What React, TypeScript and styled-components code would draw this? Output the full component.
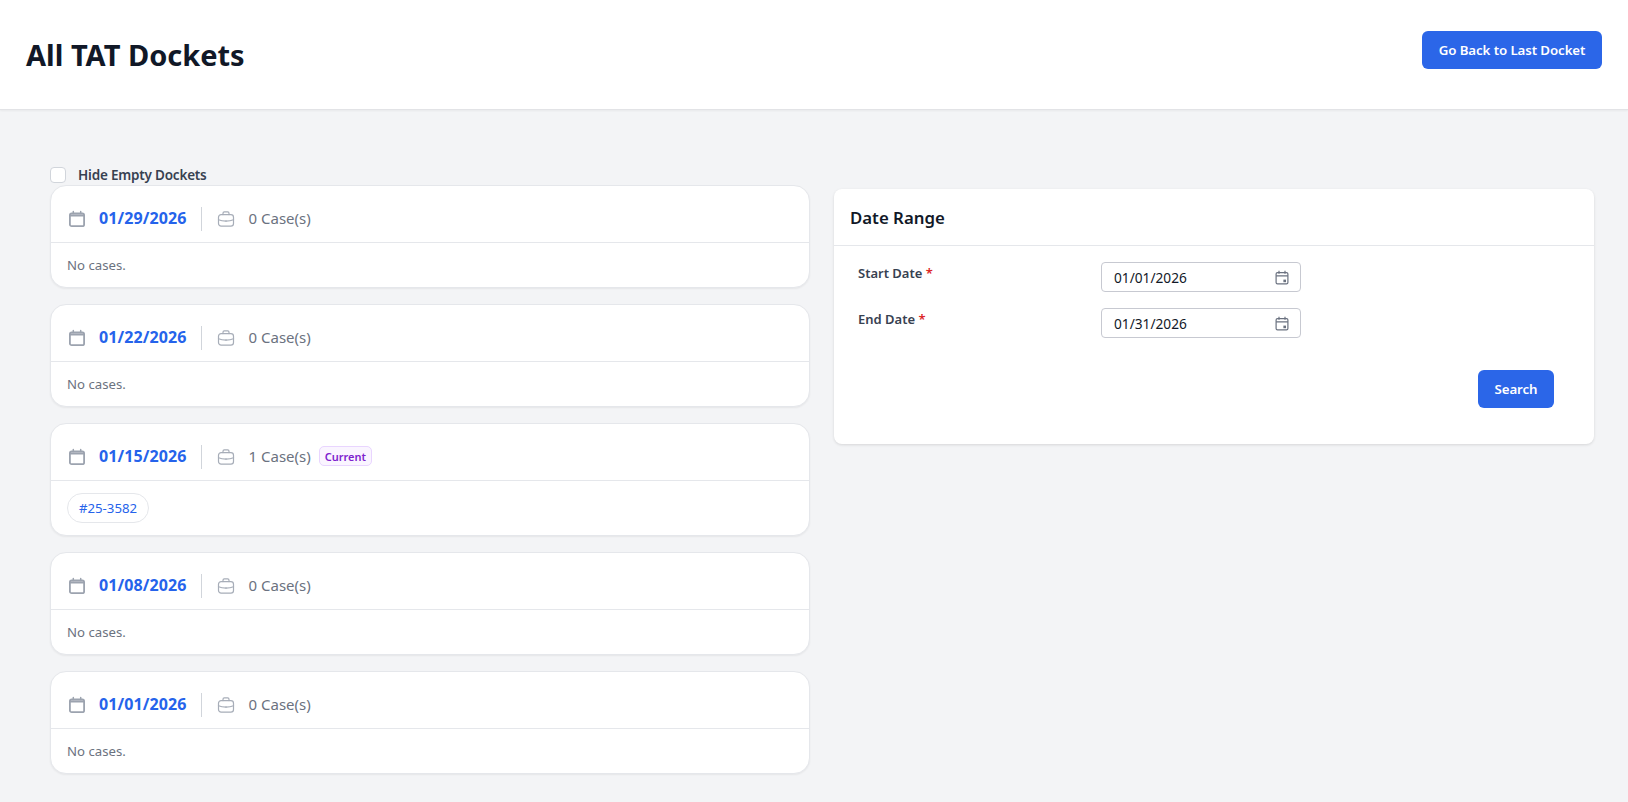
import React from "react";
import styled, { createGlobalStyle } from "styled-components";

const Global = createGlobalStyle`
  html, body { margin: 0; padding: 0; background: #f3f4f6; }
  body { font-family: "Noto Sans", "Open Sans", sans-serif; overflow: hidden; }
  * { box-sizing: border-box; }
`;

const Page = styled.div`
  min-height: 802px;
  background: #f3f4f6;
`;

const Header = styled.header`
  height: 110px;
  background: #fff;
  border-bottom: 1px solid #e2e3e6;
  box-shadow: 0 1px 2px rgba(0, 0, 0, 0.05);
  display: flex;
  align-items: flex-start;
  justify-content: space-between;
  padding: 31px 26px 0 26px;
`;

const Title = styled.h1`
  margin: 4px 0 0;
  font-size: 29px;
  line-height: 40px;
  font-weight: 700;
  color: #111827;
`;

const PrimaryButton = styled.button`
  border: 0;
  background: #2b66e8;
  color: #fff;
  font-family: inherit;
  font-size: 13.3px;
  font-weight: 600;
  height: 38px;
  padding: 0;
  width: ${(p: { $w: number }) => p.$w}px;
  border-radius: 6px;
  letter-spacing: -0.1px;
`;

const Content = styled.main`
  display: grid;
  grid-template-columns: 760px 760px;
  column-gap: 24px;
  align-items: start;
  padding: 55px 33px 0 50px;
`;

const LeftColumn = styled.div`
  display: flex;
  flex-direction: column;
`;

const CheckRow = styled.label`
  display: flex;
  align-items: center;
  height: 20px;
  gap: 12px;
  font-size: 13.5px;
  font-weight: 600;
  color: #374151;
  letter-spacing: -0.2px;
`;

const Check = styled.span`
  width: 16px;
  height: 16px;
  background: #fff;
  border: 1px solid #d1d5db;
  border-radius: 4px;
`;

const CardList = styled.div`
  display: flex;
  flex-direction: column;
  gap: 16px;
`;

const Card = styled.section`
  background: #fff;
  border: 1px solid #e5e7eb;
  border-radius: 16px;
  box-shadow: 0 1px 2px rgba(0, 0, 0, 0.06);
`;

const CardHead = styled.div`
  height: 57px;
  display: flex;
  align-items: center;
  padding: 9px 17px 0;
  border-bottom: 1px solid #e5e7eb;
`;

const DateLink = styled.span`
  font-size: 16px;
  font-weight: 700;
  color: #2563eb;
  margin: 0 0 2px 13px;
  letter-spacing: 0.1px;
`;

const Divider = styled.span`
  width: 1px;
  height: 24px;
  background: #d1d5db;
  margin: 0 15px 0 14px;
`;

const CaseCount = styled.span`
  font-size: 15px;
  color: #6b7280;
  margin: 0 0 2px 14px;
`;

const Tag = styled.span`
  margin: 0 0 1px 8px;
  height: 20px;
  padding: 0 5px;
  display: inline-flex;
  align-items: center;
  background: #faf5ff;
  border: 1px solid #e9d5ff;
  border-radius: 5px;
  color: #7e22ce;
  font-size: 11px;
  font-weight: 600;
`;

const CardBody = styled.div`
  height: 44px;
  display: flex;
  align-items: center;
  padding: 0 16px;
  font-size: 13.2px;
  color: #6b7280;
`;

const CaseBody = styled.div`
  height: 54px;
  display: flex;
  align-items: center;
  padding: 0 16px;
`;

const CasePill = styled.span`
  height: 30px;
  padding: 0 11px;
  display: inline-flex;
  align-items: center;
  border: 1px solid #e5e7eb;
  border-radius: 15px;
  font-size: 13.2px;
  color: #2563eb;
`;

const Panel = styled.section`
  margin-top: 24px;
  height: 255px;
  background: #fff;
  border-radius: 8px;
  box-shadow: 0 1px 3px rgba(0, 0, 0, 0.12);
`;

const PanelHead = styled.div`
  height: 57px;
  display: flex;
  align-items: center;
  padding: 0 16px;
  border-bottom: 1px solid #e5e7eb;
  font-size: 16.8px;
  font-weight: 600;
  color: #111827;
`;

const FormGrid = styled.div`
  display: grid;
  grid-template-columns: 243px 200px;
  row-gap: 16px;
  padding: 16px 0 0 24px;
`;

const FieldLabel = styled.label`
  font-size: 13px;
  font-weight: 600;
  color: #374151;
  line-height: 20px;
  padding-top: 1px;
`;

const Req = styled.span`
  color: #dc2626;
`;

const DateField = styled.div`
  width: 200px;
  height: 30px;
  display: flex;
  align-items: center;
  justify-content: space-between;
  border: 1px solid #c7c9d1;
  border-radius: 4px;
  padding: 0 11px 0 12px;
  background: #fff;
`;

const DateValue = styled.input`
  width: 120px;
  border: 0;
  outline: 0;
  padding: 0;
  background: transparent;
  font-family: inherit;
  font-size: 13.7px;
  color: #111827;
`;

const PanelFooter = styled.div`
  display: flex;
  justify-content: flex-end;
  padding: 32px 40px 0 0;
`;

const CalendarIcon = () => (
  <svg width="18" height="18" viewBox="0 0 18 18" fill="none" stroke="#9ca3af" strokeLinecap="round">
    <rect x="1.9" y="3.4" width="14.2" height="12.8" rx="1.8" strokeWidth="1.8" />
    <path d="M2 5.4h14" strokeWidth="2.2" strokeLinecap="butt" />
    <path d="M5.3 1.4v2M12.7 1.4v2" strokeWidth="1.5" />
  </svg>
);

const CaseIcon = () => (
  <svg width="18" height="18" viewBox="0 0 18 18" fill="none" stroke="#a7adb8" strokeWidth="1.2" strokeLinecap="round">
    <rect x="1.5" y="4.6" width="15" height="11.6" rx="2.6" />
    <path d="M6 4.6V3.2c0-.8.5-1.3 1.3-1.3h3.4c.8 0 1.3.5 1.3 1.3v1.4M1.5 9.8c2.2.9 4.8 1.3 7.5 1.3s5.3-.4 7.5-1.3M9 10.6v.9" />
  </svg>
);

const PickerIcon = () => (
  <svg width="14" height="15" viewBox="0 0 14 15" fill="none" stroke="#6b7280" strokeWidth="1.2">
    <rect x="1.1" y="2.6" width="11.8" height="11.3" rx="1.4" />
    <path d="M1.1 5.8h11.8M4 .8v3M10 .8v3" />
    <rect x="8.4" y="9.6" width="2.6" height="2.6" fill="#6b7280" stroke="none" />
  </svg>
);

type Docket = { date: string; count: number; current?: boolean; cases?: string[] };

const dockets: Docket[] = [
  { date: "01/29/2026", count: 0 },
  { date: "01/22/2026", count: 0 },
  { date: "01/15/2026", count: 1, current: true, cases: ["#25-3582"] },
  { date: "01/08/2026", count: 0 },
  { date: "01/01/2026", count: 0 },
];

export default function App() {
  return (
    <Page>
      <Global />
      <Header>
        <Title>All TAT Dockets</Title>
        <PrimaryButton $w={180}>Go Back to Last Docket</PrimaryButton>
      </Header>
      <Content>
        <LeftColumn>
          <CheckRow>
            <Check />
            Hide Empty Dockets
          </CheckRow>
          <CardList>
            {dockets.map((d) => (
              <Card key={d.date}>
                <CardHead>
                  <CalendarIcon />
                  <DateLink>{d.date}</DateLink>
                  <Divider />
                  <CaseIcon />
                  <CaseCount>{d.count} Case(s)</CaseCount>
                  {d.current && <Tag>Current</Tag>}
                </CardHead>
                {d.cases ? (
                  <CaseBody>
                    {d.cases.map((c) => (
                      <CasePill key={c}>{c}</CasePill>
                    ))}
                  </CaseBody>
                ) : (
                  <CardBody>No cases.</CardBody>
                )}
              </Card>
            ))}
          </CardList>
        </LeftColumn>
        <Panel>
          <PanelHead>Date Range</PanelHead>
          <FormGrid>
            <FieldLabel>
              Start Date <Req>*</Req>
            </FieldLabel>
            <DateField>
              <DateValue readOnly value="01/01/2026" />
              <PickerIcon />
            </DateField>
            <FieldLabel>
              End Date <Req>*</Req>
            </FieldLabel>
            <DateField>
              <DateValue readOnly value="01/31/2026" />
              <PickerIcon />
            </DateField>
          </FormGrid>
          <PanelFooter>
            <PrimaryButton $w={76}>Search</PrimaryButton>
          </PanelFooter>
        </Panel>
      </Content>
    </Page>
  );
}
